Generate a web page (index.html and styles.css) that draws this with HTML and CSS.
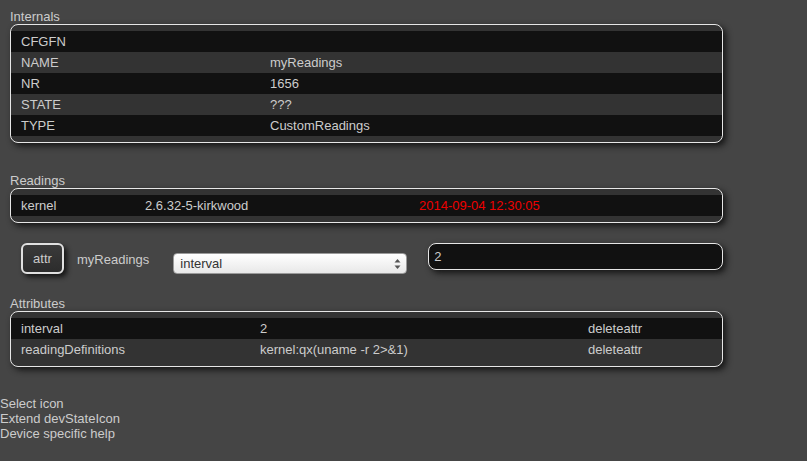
FILE: index.html
```html
<!DOCTYPE html>
<html lang="en">
<head>
  <meta charset="UTF-8">
  <title>myReadings</title>
  <link rel="stylesheet" href="styles.css">
</head>
<body>

  <div class="content">
    <div class="title first">Internals</div>
    <div class="block">
      <table class="grid internals">
        <tr class="odd"><td>CFGFN</td><td></td></tr>
        <tr class="even"><td>NAME</td><td>myReadings</td></tr>
        <tr class="odd"><td>NR</td><td>1656</td></tr>
        <tr class="even"><td>STATE</td><td>???</td></tr>
        <tr class="odd"><td>TYPE</td><td>CustomReadings</td></tr>
      </table>
    </div>

    <div class="title">Readings</div>
    <div class="block">
      <table class="grid readings">
        <tr class="odd"><td>kernel</td><td>2.6.32-5-kirkwood</td><td class="ts">2014-09-04 12:30:05</td></tr>
      </table>
    </div>

    <div class="attr-row">
      <button class="attr-btn">attr</button>
      <span class="dev-name">myReadings</span>
      <div class="select">
        <span>interval</span>
        <svg width="7" height="12" viewBox="0 0 7 12">
          <path d="M3.5 1 L6.5 4.5 L0.5 4.5 Z" fill="#555"/>
          <path d="M3.5 11 L6.5 7.5 L0.5 7.5 Z" fill="#555"/>
        </svg>
      </div>
      <input class="attr-val" type="text" value="2">
    </div>

    <div class="title">Attributes</div>
    <div class="block">
      <table class="grid attributes">
        <tr class="odd"><td>interval</td><td>2</td><td>deleteattr</td></tr>
        <tr class="even"><td>readingDefinitions</td><td>kernel:qx(uname -r 2&gt;&amp;1)</td><td>deleteattr</td></tr>
      </table>
    </div>
  </div>

  <div class="links">
    <div>Select icon</div>
    <div>Extend devStateIcon</div>
    <div>Device specific help</div>
  </div>

</body>
</html>
```

FILE: styles.css
```css
body {
  margin: 0;
  background-color: #454545;
  color: #cccccc;
  font-family: "Liberation Sans", Arial, sans-serif;
  font-size: 13px;
  line-height: 15px;
}
.content {
  padding-left: 10px;
}
.title {
  margin-top: 30px;
  height: 15px;
}
.title.first {
  margin-top: 9px;
}
/* caja redondeada con sombra */
.block {
  width: 711px;
  border: 1px solid #e6e6e6;
  border-radius: 8px;
  background-color: #333;
  padding: 6px 0;
  box-shadow: 3px 3px 6px #151515;
}
.grid {
  width: 100%;
  border-collapse: collapse;
  table-layout: fixed;
}
.grid td {
  padding: 3px 0 3px 10px;
  height: 15px;
  white-space: nowrap;
  overflow: hidden;
}
.grid tr.odd td {
  background-color: #111;
}
.grid tr.even td {
  background-color: #333;
}
.internals td:first-child { width: 239px; }
.readings td:first-child { width: 114px; }
.readings td:nth-child(2) { width: 264px; }
.attributes td:first-child { width: 229px; }
.attributes td:nth-child(2) { width: 318px; }
.ts {
  color: #ee0000;
}
/* fila del comando attr */
.attr-row {
  display: flex;
  align-items: flex-start;
  margin-top: 20px;
  height: 31px;
}
.attr-btn {
  margin-left: 11px;
  width: 43px;
  height: 31px;
  box-sizing: border-box;
  border: 2px solid #e0e0e0;
  border-radius: 6px;
  background: linear-gradient(#3a3a3a, #2c2c2c);
  color: #cccccc;
  font-family: "Liberation Sans", Arial, sans-serif;
  font-size: 13px;
  padding: 0;
  box-shadow: 3px 3px 5px #151515;
}
.dev-name {
  margin-left: 13px;
  margin-top: 9px;
}
.select {
  margin-left: 24px;
  margin-top: 10px;
  width: 234px;
  height: 21px;
  box-sizing: border-box;
  display: flex;
  align-items: center;
  justify-content: space-between;
  padding: 0 5px 0 6px;
  border: 1px solid #9a9a9a;
  border-radius: 4px;
  background: linear-gradient(#ffffff, #e8e8e8);
  color: #333;
}
.attr-val {
  margin-left: 21px;
  width: 295px;
  height: 27px;
  box-sizing: border-box;
  border: 1px solid #e6e6e6;
  border-radius: 8px;
  background-color: #111;
  color: #cccccc;
  font-family: "Liberation Sans", Arial, sans-serif;
  font-size: 13px;
  padding: 0 5px;
  box-shadow: 3px 3px 6px #151515;
  outline: none;
}
.attr-row + .title {
  margin-top: 22px;
}
.links {
  margin-top: 29px;
}
```
